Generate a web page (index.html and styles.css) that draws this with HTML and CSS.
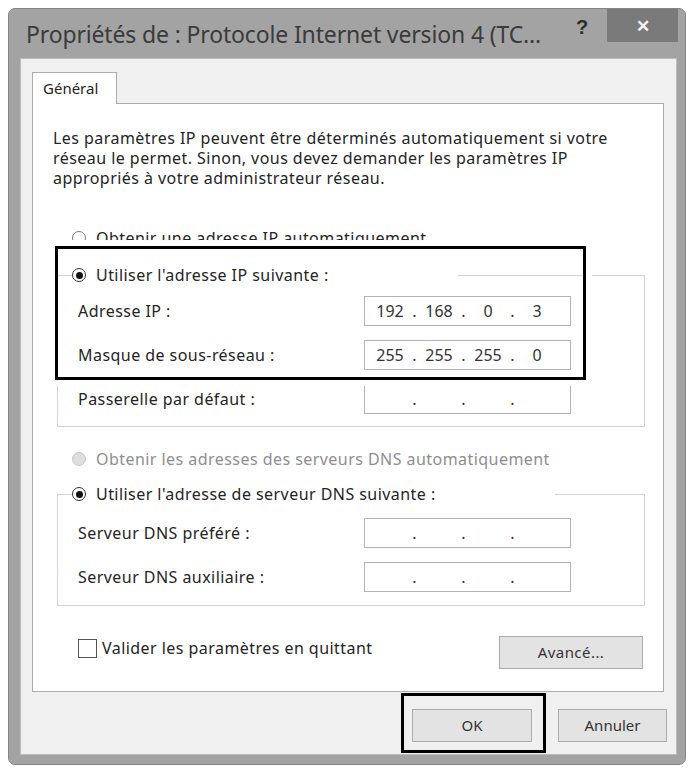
FILE: index.html
```html
<!DOCTYPE html>
<html>
<head>
  <meta charset="utf-8">
  <link rel="stylesheet" href="styles.css">
</head>
<body>
  <div class="window">
    <div class="titlebar">
      <div class="title">Propriétés de : Protocole Internet version 4 (TC...</div>
      <div class="help">?</div>
      <div class="close">&#x2715;</div>
    </div>

    <div class="client">
      <div class="tabs">
        <div class="tab">Général</div>
        <div class="tab-fill"></div>
      </div>

      <div class="panel">
        <p class="intro">Les paramètres IP peuvent être déterminés automatiquement si votre<br>réseau le permet. Sinon, vous devez demander les paramètres IP<br>appropriés à votre administrateur réseau.</p>

        <div class="option auto-ip"><span class="radio"></span>Obtenir une adresse IP automatiquement</div>

        <fieldset class="group group-ip">
          <legend><span class="option"><span class="radio on"><span></span></span>Utiliser l'adresse IP suivante :</span></legend>
          <div class="field">
            <label>Adresse IP :</label>
            <div class="ipbox"><span class="seg">192</span><span class="dot">.</span><span class="seg">168</span><span class="dot">.</span><span class="seg">0</span><span class="dot">.</span><span class="seg">3</span></div>
          </div>
          <div class="field">
            <label>Masque de sous-réseau :</label>
            <div class="ipbox"><span class="seg">255</span><span class="dot">.</span><span class="seg">255</span><span class="dot">.</span><span class="seg">255</span><span class="dot">.</span><span class="seg">0</span></div>
          </div>
          <div class="field">
            <label>Passerelle par défaut :</label>
            <div class="ipbox"><span class="seg"></span><span class="dot">.</span><span class="seg"></span><span class="dot">.</span><span class="seg"></span><span class="dot">.</span><span class="seg"></span></div>
          </div>
        </fieldset>

        <div class="option dns-auto"><span class="radio off"></span>Obtenir les adresses des serveurs DNS automatiquement</div>

        <fieldset class="group group-dns">
          <legend><span class="option"><span class="radio on"><span></span></span>Utiliser l'adresse de serveur DNS suivante :</span></legend>
          <div class="field">
            <label>Serveur DNS préféré :</label>
            <div class="ipbox"><span class="seg"></span><span class="dot">.</span><span class="seg"></span><span class="dot">.</span><span class="seg"></span><span class="dot">.</span><span class="seg"></span></div>
          </div>
          <div class="field">
            <label>Serveur DNS auxiliaire :</label>
            <div class="ipbox"><span class="seg"></span><span class="dot">.</span><span class="seg"></span><span class="dot">.</span><span class="seg"></span><span class="dot">.</span><span class="seg"></span></div>
          </div>
        </fieldset>

        <div class="footer-row">
          <div class="check"><span class="box"></span>Valider les paramètres en quittant</div>
          <div class="btn btn-adv">Avancé...</div>
        </div>

        <div class="mark mark-ip"></div>
      </div>

      <div class="buttons">
        <div class="btn btn-ok">OK<div class="mark mark-ok"></div></div>
        <div class="btn btn-cancel">Annuler</div>
      </div>
    </div>
  </div>
</body>
</html>
```

FILE: styles.css
```css
body {
  margin: 0;
  background: #fff;
  font-family: "Noto Sans", sans-serif;
  color: #242424;
}

.window {
  margin: 8px 0 0 8px;
  width: 678px;
  height: 757px;
  box-sizing: border-box;
  background: #a3a3a3;
  border: 1px solid #858585;
  border-radius: 7px;
  display: flex;
  flex-direction: column;
}

.titlebar {
  height: 49px;
  display: flex;
  align-items: center;
}
.title {
  flex: 1;
  padding-left: 17px;
  font-size: 23px;
  letter-spacing: -0.15px;
  color: #3b3b3b;
  white-space: nowrap;
  overflow: hidden;
}
.help {
  align-self: flex-start;
  width: 20px;
  margin-right: 15px;
  padding-top: 2px;
  text-align: center;
  font: bold 20px/33px "Liberation Sans", sans-serif;
  color: #2e2e2e;
}
.close {
  align-self: flex-start;
  width: 71px;
  height: 33px;
  margin-right: 7px;
  background: #7a7a7a;
  color: #f2f2f2;
  font-size: 17px;
  font-weight: bold;
  line-height: 33px;
  text-align: center;
}

.client {
  flex: 1;
  margin: 0 8px 9px 11px;
  padding: 13px 12px 0 11px;
  background: #f0f0f0;
  border: 1px solid #bdbdbd;
}

.tabs {
  display: flex;
  height: 32px;
}
.tab {
  width: 85px;
  box-sizing: border-box;
  padding-left: 10px;
  background: #fff;
  border: 1px solid #adadad;
  border-bottom: none;
  font-size: 15px;
  line-height: 30px;
}
.tab-fill {
  flex: 1;
  border-bottom: 1px solid #adadad;
}

.panel {
  position: relative;
  background: #fff;
  border: 1px solid #adadad;
  border-top: none;
  padding: 24px 0 22px;
  letter-spacing: 0.45px;
}

.intro {
  margin: 0 0 0 20px;
  font-size: 16px;
  line-height: 20px;
}

.option {
  display: flex;
  align-items: center;
  gap: 10px;
  height: 20px;
  line-height: 20px;
  font-size: 16px;
  white-space: nowrap;
}
.auto-ip {
  margin: 40px 0 0 39px;
}
.dns-auto {
  margin: 22px 0 0 39px;
  color: #8e8e8e;
}

.radio {
  flex: none;
  width: 14px;
  height: 14px;
  box-sizing: border-box;
  border: 1px solid #7a7a7a;
  border-radius: 50%;
  background: #fff;
  display: flex;
  align-items: center;
  justify-content: center;
}
.radio.on {
  border-color: #333;
}
.radio.on span {
  width: 7px;
  height: 7px;
  border-radius: 50%;
  background: #111;
}
.radio.off {
  background: #dedede;
  border-color: #c6c6c6;
}

.group {
  min-width: 0;
  margin: 17px 18px 0 24px;
  padding: 11px 0 12px;
  border: 1px solid #d2d2d2;
}
.group legend {
  margin-left: 14px;
  padding: 0;
}
.group-ip legend {
  width: 386px;
}
.group-dns {
  margin-top: 15px;
  padding-top: 14px;
  padding-bottom: 13px;
}
.group-dns legend {
  width: 483px;
}

.field {
  display: flex;
  align-items: center;
  height: 30px;
  padding-left: 20px;
}
.field + .field {
  margin-top: 14px;
}
.field label {
  width: 286px;
  font-size: 16px;
}

.ipbox {
  width: 207px;
  height: 30px;
  box-sizing: border-box;
  padding-left: 6px;
  display: flex;
  align-items: center;
  background: #fff;
  border: 1px solid #b4b4b4;
  font-size: 16px;
  letter-spacing: 0;
  color: #333;
}
.seg {
  width: 38px;
  text-align: center;
}
.dot {
  width: 11px;
  text-align: center;
}

.footer-row {
  display: flex;
  justify-content: space-between;
  align-items: flex-start;
  margin: 30px 20px 0 45px;
}
.check {
  display: flex;
  align-items: center;
  gap: 5px;
  margin-top: 1px;
  font-size: 16px;
}
.box {
  width: 19px;
  height: 19px;
  box-sizing: border-box;
  border: 1px solid #555;
  background: #fff;
}

.btn {
  height: 33px;
  box-sizing: border-box;
  background: #e3e3e3;
  border: 1px solid #acacac;
  font-size: 15px;
  line-height: 31px;
  text-align: center;
  color: #333;
}
.btn-adv {
  width: 144px;
}

.buttons {
  display: flex;
  justify-content: flex-end;
  gap: 26px;
  margin: 17px -3px 0 0;
}
.btn-ok {
  position: relative;
  width: 120px;
}
.btn-cancel {
  width: 109px;
}

/* black highlight frames drawn over the screenshot */
.mark {
  position: absolute;
  box-sizing: border-box;
  border: 3px solid #000;
}
.mark-ip {
  left: 22px;
  top: 142px;
  width: 531px;
  height: 134px;
  box-shadow: 0 0 0 6px #fff;
}
.mark-ok {
  left: -12px;
  top: -17px;
  right: -15px;
  bottom: -12px;
}
```
